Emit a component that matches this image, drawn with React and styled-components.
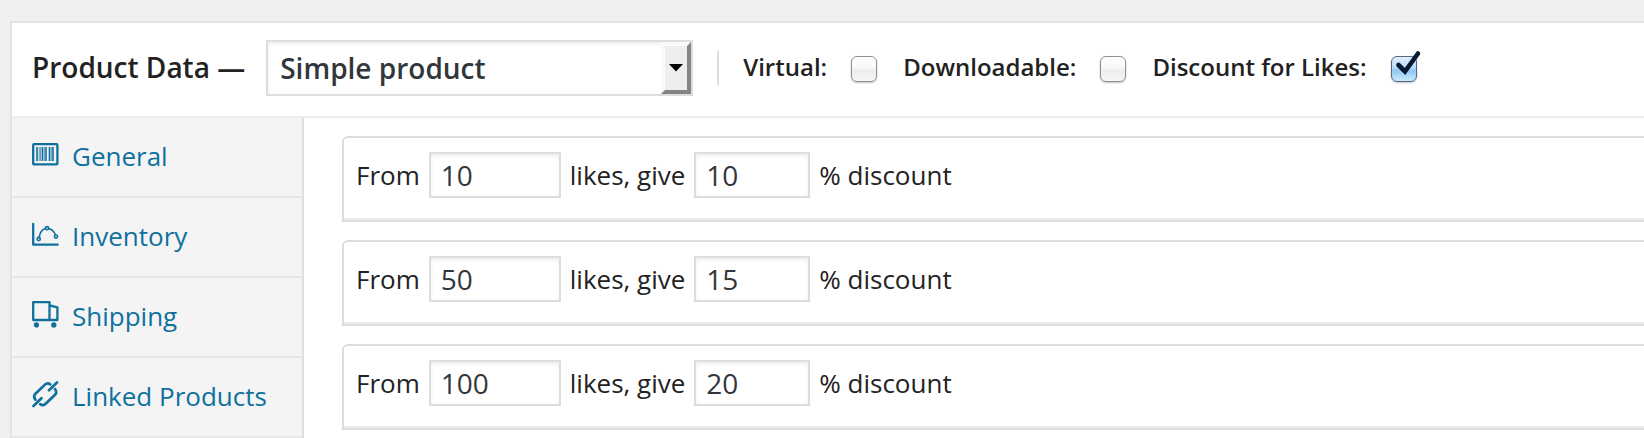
import React, { useState } from 'react';
import styled, { createGlobalStyle } from 'styled-components';

const GeneralIcon = () => (
    <TabIcon viewBox="0 0 27 27" aria-hidden="true">
        <rect x="1.2" y="3.2" width="24.2" height="20.2" rx="1" />
        <path d="M5 6V20M10.5 6V20M14 6V20M17.5 6V20M21 6V20" strokeWidth="1.6" />
        <path d="M7.2 6V20M8.6 6V20M12.3 6V20M19.3 6V20" strokeWidth="0.7" />
    </TabIcon>
);

const InventoryIcon = () => (
    <TabIcon viewBox="0 0 27 27" aria-hidden="true">
        <path d="M1.2 3V23.6H25.7" strokeLinecap="round" />
        <g strokeWidth="1.6">
            <circle cx="6.7" cy="18" r="1.6" />
            <circle cx="15" cy="7.2" r="1.6" />
            <circle cx="24" cy="15.6" r="1.6" />
            <path d="M7.2 16C8 11.5 10 8.5 13.2 7.5M16.8 7.5C20 8.5 22.3 10.8 23.3 13.8" />
        </g>
    </TabIcon>
);

const ShippingIcon = () => (
    <TabIcon viewBox="0 0 27 27" aria-hidden="true">
        <path d="M1.2 1.2H17.5V19H1.2ZM17.5 4.4L25.4 6.4V19H17.5" />
        <circle cx="4.4" cy="24" r="1.5" fill="currentColor" />
        <circle cx="21.8" cy="24" r="1.5" fill="currentColor" />
    </TabIcon>
);

const LinkedIcon = () => (
    <TabIcon viewBox="0 0 27 27" aria-hidden="true">
        <g strokeWidth="2.7" strokeLinecap="round">
            <path d="M25 1.5L17 9.2M18.2 3.4C16.3 2 14.6 2.2 13 3.6L3.4 12.8C1.9 14.3 1.8 16.4 3.4 18.6" />
            <path d="M1.5 25L9.4 17.3M8.2 23.2C10.1 24.6 11.8 24.4 13.4 23L23 13.8C24.5 12.3 24.6 10.2 23 8" />
        </g>
    </TabIcon>
);

const tabs = [
    { id: 'general', label: 'General', Icon: GeneralIcon },
    { id: 'inventory', label: 'Inventory', Icon: InventoryIcon },
    { id: 'shipping', label: 'Shipping', Icon: ShippingIcon },
    { id: 'linked', label: 'Linked Products', Icon: LinkedIcon },
];

const options = [
    { id: 'virtual', label: 'Virtual:' },
    { id: 'downloadable', label: 'Downloadable:' },
    { id: 'likes', label: 'Discount for Likes:' },
];

const App = () => {
    const [productType, setProductType] = useState('simple');
    const [checked, setChecked] = useState({ virtual: false, downloadable: false, likes: true });
    const [rules, setRules] = useState([
        { likes: '10', discount: '10' },
        { likes: '50', discount: '15' },
        { likes: '100', discount: '20' },
    ]);

    const toggleOption = (id) => {
        setChecked({ ...checked, [id]: !checked[id] });
    };

    const updateRule = (index, field, value) => {
        setRules(rules.map((rule, i) => (i === index ? { ...rule, [field]: value } : rule)));
    };

    return (
        <>
            <GlobalStyle />
            <Panel>
                <Header>
                    <Title htmlFor="product-type">Product Data —</Title>
                    <SelectWrap>
                        <Select
                            id="product-type"
                            value={productType}
                            onChange={(e) => setProductType(e.target.value)}
                        >
                            <option value="simple">Simple product</option>
                        </Select>
                        <SelectArrow>
                            <svg width="14" height="8" viewBox="0 0 14 8" aria-hidden="true">
                                <path d="M0 0H14L7 7.5Z" />
                            </svg>
                        </SelectArrow>
                    </SelectWrap>
                    <Options>
                        {options.map(({ id, label }) => (
                            <OptionLabel key={id}>
                                {label}
                                <CheckWrap>
                                    <Checkbox
                                        type="checkbox"
                                        checked={checked[id]}
                                        onChange={() => toggleOption(id)}
                                    />
                                    {checked[id] && (
                                        <CheckMark viewBox="0 0 32 32" aria-hidden="true">
                                            <path d="M7.5 15L14 21.5L27 3.5" />
                                        </CheckMark>
                                    )}
                                </CheckWrap>
                            </OptionLabel>
                        ))}
                    </Options>
                </Header>
                <Body>
                    <Sidebar>
                        {tabs.map(({ id, label, Icon }) => (
                            <Tab key={id} href={`#${id}`}>
                                <Icon />
                                {label}
                            </Tab>
                        ))}
                    </Sidebar>
                    <Rules>
                        {rules.map((rule, index) => (
                            <Rule key={index}>
                                <label htmlFor={`likes-${index}`}>From</label>
                                <NumberInput
                                    id={`likes-${index}`}
                                    type="text"
                                    $width={132}
                                    value={rule.likes}
                                    onChange={(e) => updateRule(index, 'likes', e.target.value)}
                                />
                                <label htmlFor={`discount-${index}`}>likes, give</label>
                                <NumberInput
                                    id={`discount-${index}`}
                                    type="text"
                                    $width={116}
                                    value={rule.discount}
                                    onChange={(e) => updateRule(index, 'discount', e.target.value)}
                                />
                                <span>% discount</span>
                            </Rule>
                        ))}
                    </Rules>
                </Body>
            </Panel>
        </>
    );
};

export default App;

const GlobalStyle = createGlobalStyle`
    * {
        box-sizing: border-box;
    }
    body {
        margin: 0;
        background: #f0f0f0;
        color: #222;
        font-family: 'Open Sans', sans-serif;
        font-size: 26px;
    }
`;

const Panel = styled.div`
    margin: 21px 0 0 10px;
    border: 2px solid #e3e3e3;
    border-width: 2px 0 0 2px;
    background: #fff;
`;

const Header = styled.div`
    display: flex;
    align-items: center;
    padding: 17px 20px 20px;
    border-bottom: 2px solid #ededed;
`;

const Title = styled.label`
    padding-bottom: 2px;
    font-size: 28px;
    font-weight: 600;
    line-height: 36px;
    white-space: nowrap;
`;

const SelectWrap = styled.div`
    position: relative;
    width: 427px;
    margin-left: 21px;
`;

const Select = styled.select`
    display: block;
    appearance: none;
    width: 100%;
    height: 56px;
    padding: 0 40px 0 12px;
    border: 2px solid #ddd;
    border-radius: 0;
    background: #fff;
    box-shadow: inset 0 2px 4px rgba(0, 0, 0, 0.07);
    color: #32373c;
    font-family: inherit;
    font-size: 28px;
    font-weight: 600;
`;

const SelectArrow = styled.span`
    position: absolute;
    top: 2px;
    right: 2px;
    bottom: 2px;
    display: flex;
    align-items: center;
    justify-content: center;
    width: 30px;
    border: 4px solid;
    border-color: #fafafa #848484 #848484 #fafafa;
    background: #eee;
    pointer-events: none;
`;

const Options = styled.div`
    display: flex;
    align-items: center;
    gap: 26px;
    height: 34px;
    margin-left: 24px;
    padding-left: 24px;
    border-left: 2px solid #ddd;
`;

const OptionLabel = styled.label`
    display: flex;
    align-items: center;
    gap: 24px;
    padding-bottom: 2px;
    font-size: 24px;
    font-weight: 600;
    line-height: 32px;
    white-space: nowrap;
`;

const CheckWrap = styled.span`
    position: relative;
    display: flex;
    margin-top: 4px;
`;

const Checkbox = styled.input`
    appearance: none;
    width: 26px;
    height: 26px;
    margin: 0;
    border: 1px solid #8f8f8f;
    border-radius: 6px;
    background: linear-gradient(#fff 0%, #f8f8f8 45%, #ececec 55%, #f6f6f6 100%);
    box-shadow: 0 1px 2px rgba(0, 0, 0, 0.25);
    &:checked {
        border-color: #5b6480;
        background: linear-gradient(#e4effb 0%, #b9d9f7 45%, #93c5f3 55%, #c8ecfd 100%);
    }
`;

const CheckMark = styled.svg`
    position: absolute;
    top: -6px;
    left: 0;
    width: 32px;
    height: 32px;
    fill: none;
    stroke: #061a33;
    stroke-width: 4.6;
    stroke-linecap: round;
    pointer-events: none;
`;

const Body = styled.div`
    display: flex;
`;

const Sidebar = styled.nav`
    flex: 0 0 292px;
    border-right: 2px solid #dedede;
    background: #f4f4f4;
`;

const Tab = styled.a`
    display: flex;
    align-items: center;
    gap: 13px;
    padding: 20px 20px 22px;
    border-bottom: 2px solid #e7e7e7;
    color: #0f709e;
    line-height: 36px;
    text-decoration: none;
    white-space: nowrap;
`;

const TabIcon = styled.svg`
    flex: none;
    width: 27px;
    height: 27px;
    margin-bottom: 4px;
    fill: none;
    stroke: currentColor;
    stroke-width: 2.3;
    stroke-linecap: butt;
    stroke-linejoin: round;
`;

const Rules = styled.div`
    display: flex;
    flex: 1;
    flex-direction: column;
    gap: 18px;
    padding: 18px 0 8px 38px;
`;

const Rule = styled.div`
    display: flex;
    align-items: flex-start;
    gap: 9px;
    height: 86px;
    padding: 14px 12px;
    border: 2px solid #ddd;
    border-right: none;
    border-radius: 6px 0 0 0;
    box-shadow: inset 0 -2px 0 #ededed;
    line-height: 46px;
    white-space: nowrap;
`;

const NumberInput = styled.input`
    width: ${({ $width }) => $width}px;
    height: 46px;
    padding: 0 10px;
    border: 2px solid #ddd;
    border-radius: 0;
    background: #fff;
    box-shadow: inset 0 2px 4px rgba(0, 0, 0, 0.07);
    color: #32373c;
    font-family: inherit;
    font-size: 28px;
`;
